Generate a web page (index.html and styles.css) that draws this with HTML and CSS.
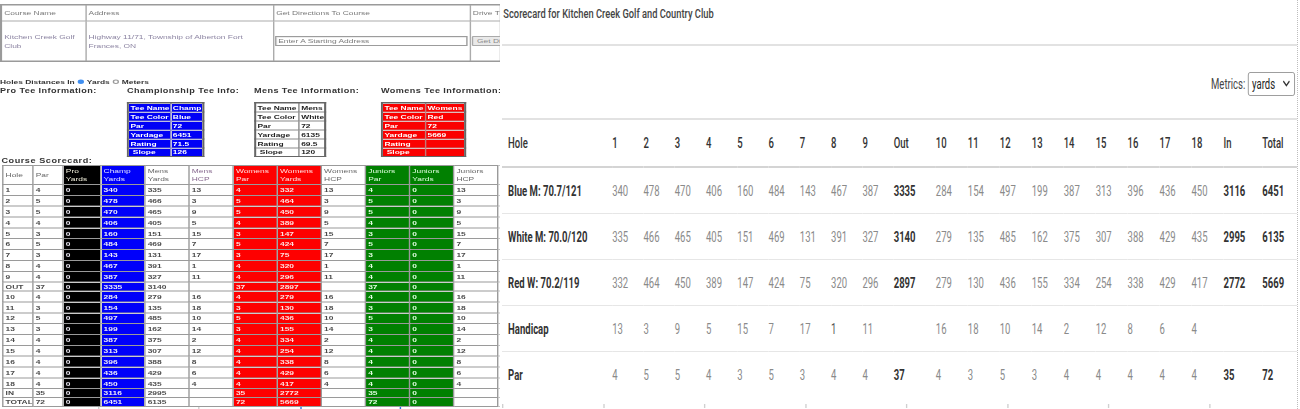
FILE: index.html
```html
<!DOCTYPE html>
<html>
<head>
<meta charset="utf-8">
<link rel="stylesheet" href="styles.css">
</head>
<body>
<div class="lp">
  <div class="lp-inner">
    <table class="info">
      <colgroup><col class="c1"><col class="c2"><col class="c3"><col class="c4"></colgroup>
      <tr><th>Course Name</th><th>Address</th><th>Get Directions To Course</th><th>Drive Ti</th></tr>
      <tr>
        <td>Kitchen Creek Golf Club</td>
        <td>Highway 11/71, Township of Alberton Fort Frances, ON</td>
        <td class="dir"><div class="addr-input">Enter A Starting Address</div></td>
        <td class="dir"><span class="btn">Get Di</span></td>
      </tr>
    </table>

    <div class="units">Holes Distances In <span class="radio on"></span>Yards <span class="radio off"></span>Meters</div>

    <div class="tees">
      <div class="tee-col"><div class="tee-title">Pro Tee Information:</div></div>
      <div class="tee-col">
        <div class="tee-title">Championship Tee Info:</div>
        <table class="tee blue">
          <colgroup><col class="t1"><col class="t2"></colgroup>
          <tr><td>Tee Name</td><td>Champ</td></tr>
          <tr><td>Tee Color</td><td>Blue</td></tr>
          <tr><td>Par</td><td>72</td></tr>
          <tr><td>Yardage</td><td>6451</td></tr>
          <tr><td>Rating</td><td>71.5</td></tr>
          <tr><td>&nbsp;Slope</td><td>126</td></tr>
        </table>
      </div>
      <div class="tee-col">
        <div class="tee-title">Mens Tee Information:</div>
        <table class="tee white">
          <colgroup><col class="t1"><col class="t2"></colgroup>
          <tr><td>Tee Name</td><td>Mens</td></tr>
          <tr><td>Tee Color</td><td>White</td></tr>
          <tr><td>Par</td><td>72</td></tr>
          <tr><td>Yardage</td><td>6135</td></tr>
          <tr><td>Rating</td><td>69.5</td></tr>
          <tr><td>&nbsp;Slope</td><td>120</td></tr>
        </table>
      </div>
      <div class="tee-col">
        <div class="tee-title">Womens Tee Information:</div>
        <table class="tee red">
          <colgroup><col class="t1"><col class="t2"></colgroup>
          <tr><td>Tee Name</td><td>Womens</td></tr>
          <tr><td>Tee Color</td><td>Red</td></tr>
          <tr><td>Par</td><td>72</td></tr>
          <tr><td>Yardage</td><td>5669</td></tr>
          <tr><td>Rating</td><td></td></tr>
          <tr><td>&nbsp;Slope</td><td></td></tr>
        </table>
      </div>
    </div>

    <div class="sc-title">Course Scorecard:</div>
    <table class="sc">
      <colgroup>
        <col class="s-narrow"><col class="s-narrow"><col class="s-pro">
        <col class="s-w"><col class="s-w"><col class="s-w"><col class="s-w"><col class="s-w">
        <col class="s-w"><col class="s-w"><col class="s-w"><col class="s-w"><col class="s-x">
      </colgroup>
      <thead>
        <tr><th>Hole</th><th>Par</th><th class="k">Pro<br>Yards</th><th class="u">Champ<br>Yards</th><th>Mens<br>Yards</th><th class="hc">Mens<br>HCP</th><th class="r">Womens<br>Par</th><th class="r">Womens<br>Yards</th><th>Womens<br>HCP</th><th class="g">Juniors<br>Par</th><th class="g">Juniors<br>Yards</th><th>Juniors<br>HCP</th><th class="x"></th></tr>
      </thead>
      <tbody>
        <tr><td>1</td><td>4</td><td class="k">0</td><td class="u">340</td><td>335</td><td>13</td><td class="r">4</td><td class="r">332</td><td>13</td><td class="g">4</td><td class="g">0</td><td>13</td><td class="x"></td></tr>
        <tr><td>2</td><td>5</td><td class="k">0</td><td class="u">478</td><td>466</td><td>3</td><td class="r">5</td><td class="r">464</td><td>3</td><td class="g">5</td><td class="g">0</td><td>3</td><td class="x"></td></tr>
        <tr><td>3</td><td>5</td><td class="k">0</td><td class="u">470</td><td>465</td><td>9</td><td class="r">5</td><td class="r">450</td><td>9</td><td class="g">5</td><td class="g">0</td><td>9</td><td class="x"></td></tr>
        <tr><td>4</td><td>4</td><td class="k">0</td><td class="u">406</td><td>405</td><td>5</td><td class="r">4</td><td class="r">389</td><td>5</td><td class="g">4</td><td class="g">0</td><td>5</td><td class="x"></td></tr>
        <tr><td>5</td><td>3</td><td class="k">0</td><td class="u">160</td><td>151</td><td>15</td><td class="r">3</td><td class="r">147</td><td>15</td><td class="g">3</td><td class="g">0</td><td>15</td><td class="x"></td></tr>
        <tr><td>6</td><td>5</td><td class="k">0</td><td class="u">484</td><td>469</td><td>7</td><td class="r">5</td><td class="r">424</td><td>7</td><td class="g">5</td><td class="g">0</td><td>7</td><td class="x"></td></tr>
        <tr><td>7</td><td>3</td><td class="k">0</td><td class="u">143</td><td>131</td><td>17</td><td class="r">3</td><td class="r">75</td><td>17</td><td class="g">3</td><td class="g">0</td><td>17</td><td class="x"></td></tr>
        <tr><td>8</td><td>4</td><td class="k">0</td><td class="u">467</td><td>391</td><td>1</td><td class="r">4</td><td class="r">320</td><td>1</td><td class="g">4</td><td class="g">0</td><td>1</td><td class="x"></td></tr>
        <tr><td>9</td><td>4</td><td class="k">0</td><td class="u">387</td><td>327</td><td>11</td><td class="r">4</td><td class="r">296</td><td>11</td><td class="g">4</td><td class="g">0</td><td>11</td><td class="x"></td></tr>
        <tr class="sum"><td>OUT</td><td>37</td><td class="k">0</td><td class="u">3335</td><td>3140</td><td></td><td class="r">37</td><td class="r">2897</td><td></td><td class="g">37</td><td class="g">0</td><td></td><td class="x"></td></tr>
        <tr><td>10</td><td>4</td><td class="k">0</td><td class="u">284</td><td>279</td><td>16</td><td class="r">4</td><td class="r">279</td><td>16</td><td class="g">4</td><td class="g">0</td><td>16</td><td class="x"></td></tr>
        <tr><td>11</td><td>3</td><td class="k">0</td><td class="u">154</td><td>135</td><td>18</td><td class="r">3</td><td class="r">130</td><td>18</td><td class="g">3</td><td class="g">0</td><td>18</td><td class="x"></td></tr>
        <tr><td>12</td><td>5</td><td class="k">0</td><td class="u">497</td><td>485</td><td>10</td><td class="r">5</td><td class="r">436</td><td>10</td><td class="g">5</td><td class="g">0</td><td>10</td><td class="x"></td></tr>
        <tr><td>13</td><td>3</td><td class="k">0</td><td class="u">199</td><td>162</td><td>14</td><td class="r">3</td><td class="r">155</td><td>14</td><td class="g">3</td><td class="g">0</td><td>14</td><td class="x"></td></tr>
        <tr><td>14</td><td>4</td><td class="k">0</td><td class="u">387</td><td>375</td><td>2</td><td class="r">4</td><td class="r">334</td><td>2</td><td class="g">4</td><td class="g">0</td><td>2</td><td class="x"></td></tr>
        <tr><td>15</td><td>4</td><td class="k">0</td><td class="u">313</td><td>307</td><td>12</td><td class="r">4</td><td class="r">254</td><td>12</td><td class="g">4</td><td class="g">0</td><td>12</td><td class="x"></td></tr>
        <tr><td>16</td><td>4</td><td class="k">0</td><td class="u">396</td><td>388</td><td>8</td><td class="r">4</td><td class="r">338</td><td>8</td><td class="g">4</td><td class="g">0</td><td>8</td><td class="x"></td></tr>
        <tr><td>17</td><td>4</td><td class="k">0</td><td class="u">436</td><td>429</td><td>6</td><td class="r">4</td><td class="r">429</td><td>6</td><td class="g">4</td><td class="g">0</td><td>6</td><td class="x"></td></tr>
        <tr><td>18</td><td>4</td><td class="k">0</td><td class="u">450</td><td>435</td><td>4</td><td class="r">4</td><td class="r">417</td><td>4</td><td class="g">4</td><td class="g">0</td><td>4</td><td class="x"></td></tr>
        <tr class="sum"><td>IN</td><td>35</td><td class="k">0</td><td class="u">3116</td><td>2995</td><td></td><td class="r">35</td><td class="r">2772</td><td></td><td class="g">35</td><td class="g">0</td><td></td><td class="x"></td></tr>
        <tr class="sum"><td>TOTAL</td><td>72</td><td class="k">0</td><td class="u">6451</td><td>6135</td><td></td><td class="r">72</td><td class="r">5669</td><td></td><td class="g">72</td><td class="g">0</td><td></td><td class="x"></td></tr>
      </tbody>
    </table>
    <div class="lticks"><span class="tk"></span><span class="tk t2"></span><span class="tk blue t3"></span><span class="tk blue t4"></span></div>
  </div>
</div>

<div class="rp">
  <div class="rp-inner">
    <div class="rp-title">Scorecard for Kitchen Creek Golf and Country Club</div>
    <div class="rp-metrics">
      <span>Metrics:</span>
      <div class="sel"><span>yards</span><svg width="11" height="7" viewBox="0 0 11 7"><path d="M1 1.2l4.5 4.3L10 1.2" fill="none" stroke="#333" stroke-width="1.7"/></svg></div>
    </div>
    <table class="card">
      <colgroup>
        <col class="cl"><col class="c9"><col class="c9"><col class="c9"><col class="c9"><col class="c9"><col class="c9"><col class="c9"><col class="c9"><col class="c9">
        <col class="co"><col class="c10"><col class="c10"><col class="c10"><col class="c10"><col class="c10"><col class="c10"><col class="c10"><col class="c10"><col class="c10">
        <col class="ci"><col class="ct">
      </colgroup>
      <thead>
        <tr><th class="lbl">Hole</th><th>1</th><th>2</th><th>3</th><th>4</th><th>5</th><th>6</th><th>7</th><th>8</th><th>9</th><th>Out</th><th>10</th><th>11</th><th>12</th><th>13</th><th>14</th><th>15</th><th>16</th><th>17</th><th>18</th><th>In</th><th>Total</th></tr>
      </thead>
      <tbody>
        <tr><th class="lbl">Blue M: 70.7/121</th><td>340</td><td>478</td><td>470</td><td>406</td><td>160</td><td>484</td><td>143</td><td>467</td><td>387</td><td class="tot">3335</td><td>284</td><td>154</td><td>497</td><td>199</td><td>387</td><td>313</td><td>396</td><td>436</td><td>450</td><td class="tot">3116</td><td class="tot">6451</td></tr>
        <tr><th class="lbl">White M: 70.0/120</th><td>335</td><td>466</td><td>465</td><td>405</td><td>151</td><td>469</td><td>131</td><td>391</td><td>327</td><td class="tot">3140</td><td>279</td><td>135</td><td>485</td><td>162</td><td>375</td><td>307</td><td>388</td><td>429</td><td>435</td><td class="tot">2995</td><td class="tot">6135</td></tr>
        <tr><th class="lbl">Red W: 70.2/119</th><td>332</td><td>464</td><td>450</td><td>389</td><td>147</td><td>424</td><td>75</td><td>320</td><td>296</td><td class="tot">2897</td><td>279</td><td>130</td><td>436</td><td>155</td><td>334</td><td>254</td><td>338</td><td>429</td><td>417</td><td class="tot">2772</td><td class="tot">5669</td></tr>
        <tr><th class="lbl">Handicap</th><td>13</td><td>3</td><td>9</td><td>5</td><td>15</td><td>7</td><td>17</td><td class="dk">1</td><td>11</td><td class="tot"></td><td>16</td><td>18</td><td>10</td><td>14</td><td>2</td><td>12</td><td>8</td><td>6</td><td>4</td><td class="tot"></td><td class="tot"></td></tr>
        <tr class="last"><th class="lbl">Par</th><td>4</td><td>5</td><td>5</td><td>4</td><td>3</td><td>5</td><td>3</td><td>4</td><td>4</td><td class="tot">37</td><td>4</td><td>3</td><td>5</td><td>3</td><td>4</td><td>4</td><td>4</td><td>4</td><td>4</td><td class="tot">35</td><td class="tot">72</td></tr>
      </tbody>
    </table>
    <div class="rticks"><span></span><span></span><span></span><span></span><span></span><span></span><span></span><span></span></div>
  </div>
</div>
</body>
</html>
```

FILE: styles.css
```css
html, body { margin: 0; padding: 0; background: #fff; }
body { width: 1300px; height: 409px; overflow: hidden; display: flex; }

/* ---------- left panel (rendered large, then squeezed) ---------- */
.lp { flex: none; width: 500px; height: 409px; overflow: hidden; }
.lp-inner {
  width: 714px; height: 818px;
  transform: scale(0.7, 0.5); transform-origin: 0 0;
  font-family: "Liberation Sans", Arial, sans-serif; font-size: 12px; color: #555;
}

.info { border-collapse: collapse; border: 3px solid #9a9a9a; width: 714px; table-layout: fixed; margin-top: 4px; }
.info .c1 { width: 121px; }
.info .c2 { width: 268px; }
.info .c3 { width: 281px; }
.info .c4 { width: 44px; }
.info th, .info td { border: 2px solid #ababab; text-align: left; padding: 0 3px; font-weight: normal; white-space: normal; }
.info th { height: 30px; color: #777; white-space: nowrap; overflow: hidden; }
.info td { height: 78px; color: #8c84a2; line-height: 18px; }
.info td.dir { padding: 0 3px 0 1px; white-space: nowrap; overflow: hidden; }
.addr-input {
  height: 20px; box-sizing: border-box; border: 2px solid #9c9c9c;
  box-shadow: inset 1px 1px 0 #dcdcdc; color: #7a7a7a; line-height: 16px;
  padding-left: 3px; white-space: nowrap; background: #fff;
}
.btn {
  display: inline-block; height: 20px; box-sizing: border-box; border: 2px solid #aaa;
  background: #e9e9e9; color: #8a8a8a; line-height: 16px; padding: 0 6px; border-radius: 2px;
  vertical-align: middle;
}

.units { margin-top: 31px; height: 16px; line-height: 16px; font-weight: bold; color: #333; display: flex; align-items: center; white-space: pre; }
.radio { display: inline-block; width: 9px; height: 9px; border-radius: 50%; box-sizing: border-box; margin: 0 4px 0 1px; }
.radio.on { background: #3f8ef0; }
.radio.off { border: 2px solid #9a9a9a; }

.tees { display: grid; grid-template-columns: repeat(4, 181.4px); margin-top: 2px; height: 141px; }
.tee-col { overflow: hidden; }
.tee-title { font-weight: bold; font-size: 13px; color: #333; line-height: 16px; white-space: nowrap; letter-spacing: 0.6px; }
.tee { border-collapse: collapse; margin-top: 15px; border: 3px solid #666; table-layout: fixed; }
.tee tr { height: 18px; }
.tee td { border: 2px solid #8a8a8a; padding: 0 2px; font-weight: bold; line-height: 14px; white-space: nowrap; overflow: hidden; }
.tee.blue { width: 108px; }
.tee.blue .t1 { width: 61px; }
.tee.blue .t2 { width: 47px; }
.tee.blue td { background: #0000f6; color: #fff; border-color: #7b7bc4; }
.tee.white { width: 100px; }
.tee.white .t1 { width: 63px; }
.tee.white .t2 { width: 37px; }
.tee.white td { background: #fff; color: #222; }
.tee.red { width: 119px; }
.tee.red .t1 { width: 62px; }
.tee.red .t2 { width: 57px; }
.tee.red td { background: #fb0000; color: #fff; border-color: #c07a7a; }

.sc-title { font-weight: bold; font-size: 13px; color: #333; line-height: 14px; height: 14px; white-space: nowrap; letter-spacing: 0.8px; margin-left: 2px; }
.sc { border-collapse: collapse; margin: 2px 0 0 3px; table-layout: fixed; width: 767px; border: 2px solid #888; }
.sc .s-narrow { width: 43px; }
.sc .s-pro { width: 54px; }
.sc .s-w { width: 63px; }
.sc .s-x { width: 60px; }
.sc th, .sc td {
  border: 2px solid #9a9a9a; padding: 0 3px; text-align: left; font-weight: normal;
  line-height: 16px; white-space: nowrap; overflow: hidden; color: #444;
}
.sc tbody td { font-weight: bold; color: #4a4a4a; }
.sc thead tr { height: 38px; }
.sc thead th { line-height: 17px; color: #666; }
.sc thead th.hc { color: #86678e; }
.sc tbody tr { height: 21.7px; }
.sc tbody tr.sum { height: 18px; }
.sc .k { background: #000; color: #f2f0dc; }
.sc .u { background: #0000fa; color: #e4e4ff; }
.sc .r { background: #fe0000; color: #ffe2e2; }
.sc .g { background: #018001; color: #e2ffe2; }
.sc tbody td.k, .sc tbody td.u { color: #f0eef8; }
.sc tbody td.r { color: #ffe2e2; }
.sc tbody td.g { color: #e2ffe2; }
.sc .x { border-color: #c4c4c4; }

.lticks { display: flex; height: 10px; }
.tk { flex: none; width: 2px; height: 10px; background: #cfcfcf; margin-left: 140px; }
.tk.t2 { margin-left: 141px; }
.tk.t3 { margin-left: 144px; }
.tk.t4 { margin-left: 140px; }
.tk.blue { background: #2f6fe8; }

/* ---------- right panel (rendered wide, then condensed) ---------- */
.rp { flex: none; width: 795px; margin-left: 2px; height: 409px; overflow: hidden; border-right: 1px dotted #bdbdbd; }
.rp-inner {
  width: 1169px; transform: scaleX(0.68); transform-origin: 0 0;
  font-family: Roboto, "Liberation Sans", sans-serif; color: #333;
}
.rp-title {
  height: 46px; box-sizing: border-box; padding: 4px 0 0 2px;
  font-size: 13.7px; line-height: 19px; font-weight: 500; color: #444;
  border-bottom: 2px solid #e2e2e2; white-space: nowrap;
}
.rp-metrics {
  height: 74px; box-sizing: border-box; padding: 3px 3px 0 0;
  display: flex; justify-content: flex-end; align-items: center;
  border-bottom: 2px solid #e2e2e2; font-size: 14px; color: #444;
}
.sel {
  margin-left: 4px; width: 69px; height: 24px; box-sizing: border-box;
  border: 1px solid #8c8c8c; border-radius: 3px;
  display: flex; align-items: center; justify-content: space-between;
  padding: 0 6px 0 5px; color: #222;
}
.card { width: 1169px; border-collapse: collapse; table-layout: fixed; font-size: 14px; }
.card .cl { width: 162px; }
.card .c9 { width: 46px; }
.card .co { width: 62px; }
.card .c10 { width: 47px; }
.card .ci { width: 57px; }
.card .ct { width: 51px; }
.card thead th { height: 46px; border-bottom: 2px solid #d4d4d4; font-weight: 500; text-align: left; padding: 0; color: #333; }
.card tbody th, .card tbody td { height: 45px; border-bottom: 1px solid #e6e6e6; padding: 0; text-align: left; color: #8a8a8a; font-weight: 400; white-space: nowrap; }
.card tbody tr.last th, .card tbody tr.last td { border-bottom: none; }
.card .lbl { padding-left: 9px; font-weight: 700; color: #333; }
.card thead .lbl { font-weight: 500; }
.card .tot { font-weight: 700; color: #333; }
.card .dk { color: #555; }

.rticks { display: flex; margin-top: 7px; height: 4px; }
.rticks span { flex: none; width: 148.5px; height: 4px; border-left: 2px solid #d0d0d0; box-sizing: border-box; }
```
